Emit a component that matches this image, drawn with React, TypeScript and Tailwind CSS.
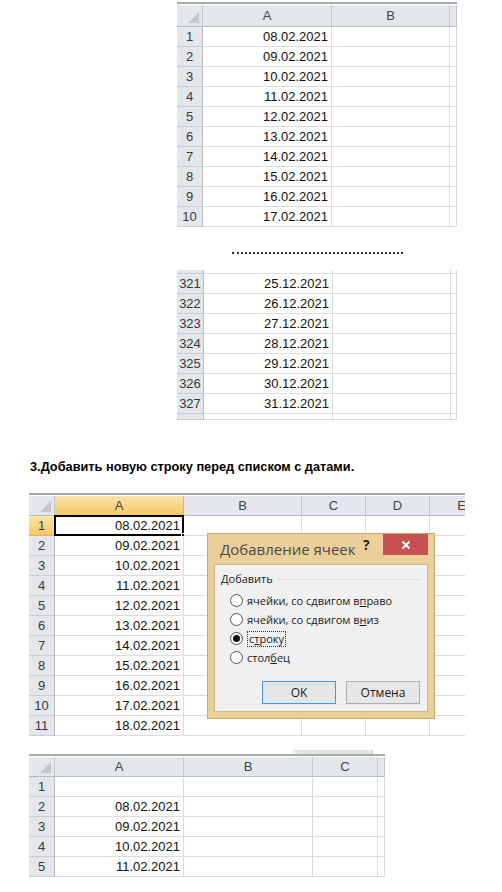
import React from "react";

type Col = { label: string; w: number; hl?: boolean };
type Row = { n: string; a?: string; h?: number; hl?: boolean; sel?: boolean };

const FONT = { fontFamily: '"Liberation Sans", Arial, sans-serif' };
const UI = { fontFamily: '"Open Sans", "Noto Sans", sans-serif' };

function Corner() {
  return (
    <div className="relative h-full w-full">
      <svg className="absolute right-[3px] bottom-[3px]" width="11" height="11" viewBox="0 0 11 11">
        <polygon points="11,0 11,11 0,11" fill="#c3c7cc" />
      </svg>
    </div>
  );
}

function Sheet({
  cols,
  rows,
  headerH = 22,
  showHeader = true,
  topStub = 0,
  bottomStub = 0,
}: {
  cols: Col[];
  rows: Row[];
  headerH?: number;
  showHeader?: boolean;
  topStub?: number;
  bottomStub?: number;
}) {
  const all: Row[] = [];
  if (topStub) all.push({ n: "", h: topStub });
  rows.forEach((r) => all.push(r));
  if (bottomStub) all.push({ n: "", h: bottomStub });

  return (
    <div className="flex flex-col text-[13px] text-[#111]" style={FONT}>
      {showHeader && (
        <>
          <div className="h-[2px] bg-[#a9a9a9]" />
          <div className="h-[1px] bg-white" />
          <div className="flex" style={{ height: headerH }}>
            {cols.map((c, i) => (
              <div
                key={i}
                style={{ width: c.w }}
                className={`shrink-0 flex items-center justify-center border-r border-b text-[#444] ${
                  c.hl
                    ? "bg-gradient-to-b from-[#fbe3a8] to-[#f6c960] border-r-[#e0b259] border-b-[#e9a73c]"
                    : "bg-[#e3e6ea] border-r-[#c3c7cc] border-b-[#b8bcc1]"
                }`}
              >
                {i === 0 ? <Corner /> : c.label}
              </div>
            ))}
          </div>
        </>
      )}
      {all.map((r, ri) => (
        <div key={ri} className="flex" style={{ height: r.h ?? 20 }}>
          {cols.map((c, ci) => {
            if (ci === 0)
              return (
                <div
                  key={ci}
                  style={{ width: c.w }}
                  className={`shrink-0 flex items-center justify-center border-r border-b text-[#3a3a3a] ${
                    r.hl
                      ? "bg-gradient-to-b from-[#fbe3a8] to-[#f6c960] border-r-[#e9a73c] border-b-[#e0b259]"
                      : "bg-[#e3e6ea] border-r-[#b8bcc1] border-b-[#c9cdd2]"
                  }`}
                >
                  {r.n}
                </div>
              );
            return (
              <div
                key={ci}
                style={{ width: c.w }}
                className="relative shrink-0 flex items-center justify-end pr-[3px] border-r border-b border-[#dcdcdc] bg-white"
              >
                {ci === 1 && r.a}
                {ci === 1 && r.sel && (
                  <>
                    <div className="absolute -left-[1px] -top-[1px] -right-[1px] -bottom-[1px] border-2 border-black" />
                    <div className="absolute -right-[3px] -bottom-[3px] w-[5px] h-[5px] bg-black border border-white" />
                  </>
                )}
              </div>
            );
          })}
        </div>
      ))}
    </div>
  );
}

function Radio({ checked, children }: { checked?: boolean; children: React.ReactNode }) {
  return (
    <div className="flex items-center h-[19px] gap-[4px]">
      <div className="w-[13px] h-[13px] rounded-full border border-[#555] bg-white flex items-center justify-center">
        {checked && <div className="w-[7px] h-[7px] rounded-full bg-[#111]" />}
      </div>
      <div className={checked ? "border border-dotted border-[#333] px-[1px] leading-[14px]" : "leading-[14px]"}>
        {children}
      </div>
    </div>
  );
}

function Dialog() {
  return (
    <div
      className="absolute left-[178px] top-[40px] w-[228px] h-[186px] bg-[#ebcf99] border border-[#c9a96c] flex flex-col"
      style={UI}
    >
      <div className="flex h-[21px]">
        <div className="flex-1 pl-[12px] pt-[4px] text-[15px] leading-[22px] text-[#4a4a4a]">Добавление ячеек</div>
        <div className="w-[20px] pt-[1px] text-[14px] font-bold text-[#222] leading-[20px]">?</div>
        <div className="w-[45px] h-[21px] bg-[#c75050] flex items-center justify-center mr-[6px]">
          <svg width="10" height="10" viewBox="0 0 10 10">
            <path d="M1.5 1.5 L8.5 8.5 M8.5 1.5 L1.5 8.5" stroke="white" strokeWidth="2" />
          </svg>
        </div>
      </div>
      <div className="mt-[9px] mx-[6px] h-[148px] bg-[#f0f0f0] border border-[#cdb98e] flex flex-col px-[6px] pt-[6px] text-[11px] text-[#1a1a1a]">
        <div className="flex items-center gap-[4px] h-[16px]">
          <span>Добавить</span>
          <div className="flex-1 h-[1px] bg-[#dcdcdc]" />
        </div>
        <div className="flex flex-col ml-[9px] mt-[4px]">
          <Radio>
            ячейки, со сдвигом в<u>п</u>раво
          </Radio>
          <Radio>
            ячейки, со сдвигом в<u>н</u>из
          </Radio>
          <Radio checked>
            с<u>т</u>року
          </Radio>
          <Radio>
            стол<u>б</u>ец
          </Radio>
        </div>
        <div className="flex gap-[10px] ml-[41px] mt-[14px]">
          <div className="w-[74px] h-[23px] bg-[#e6e6e6] border border-[#3c9be8] flex items-center justify-center text-[12px]">
            OK
          </div>
          <div className="w-[74px] h-[23px] bg-[#e6e6e6] border border-[#adadad] flex items-center justify-center text-[12px]">
            Отмена
          </div>
        </div>
      </div>
    </div>
  );
}

const COLS1: Col[] = [
  { label: "", w: 26 },
  { label: "A", w: 129 },
  { label: "B", w: 118 },
  { label: "", w: 7 },
];

const ROWS1: Row[] = Array.from({ length: 10 }, (_, i) => ({
  n: String(i + 1),
  a: `${String(8 + i).padStart(2, "0")}.02.2021`,
}));

const ROWS2: Row[] = Array.from({ length: 7 }, (_, i) => ({
  n: String(321 + i),
  a: `${25 + i}.12.2021`,
}));

const COLS2: Col[] = [
  { label: "", w: 27 },
  { label: "", w: 129 },
  { label: "", w: 118 },
  { label: "", w: 6 },
];

const COLS3: Col[] = [
  { label: "", w: 26 },
  { label: "A", w: 129, hl: true },
  { label: "B", w: 118 },
  { label: "C", w: 64 },
  { label: "D", w: 64 },
  { label: "E", w: 64 },
];

const ROWS3: Row[] = Array.from({ length: 11 }, (_, i) => ({
  n: String(i + 1),
  a: `${String(8 + i).padStart(2, "0")}.02.2021`,
  hl: i === 0,
  sel: i === 0,
}));

const COLS4: Col[] = [
  { label: "", w: 26 },
  { label: "A", w: 129 },
  { label: "B", w: 129 },
  { label: "C", w: 65 },
  { label: "", w: 7 },
];

const ROWS4: Row[] = [
  { n: "1" },
  { n: "2", a: "08.02.2021" },
  { n: "3", a: "09.02.2021" },
  { n: "4", a: "10.02.2021" },
  { n: "5", a: "11.02.2021" },
];

export default function App() {
  return (
    <div className="relative w-[502px] h-[892px] bg-white overflow-hidden flex flex-col">
      <div className="mt-[2px] ml-[177px] w-[280px] overflow-hidden">
        <Sheet cols={COLS1} rows={ROWS1} />
      </div>

      <div className="mt-[25px] ml-[232px] w-[171px] border-t-2 border-dotted border-[#333]" />

      <div className="mt-[16px] ml-[177px] w-[280px] overflow-hidden">
        <Sheet cols={COLS2} rows={ROWS2} showHeader={false} topStub={4} bottomStub={6} />
      </div>

      <div className="mt-[39px] ml-[30px] text-[12.75px] leading-[16px] font-bold text-black" style={FONT}>
        3.Добавить новую строку перед списком с датами.
      </div>

      <div className="relative mt-[18px] ml-[29px] w-[436px]">
        <div className="overflow-hidden">
          <Sheet cols={COLS3} rows={ROWS3} headerH={20} />
        </div>
        <Dialog />
      </div>

      <div className="mt-[14px] ml-[29px] w-[356px] overflow-hidden flex flex-col">
        <div className="ml-[262px] w-[82px] h-[4px] flex">
          <svg width="6" height="4" viewBox="0 0 6 4">
            <polygon points="0,0 6,0 6,4" fill="#e4e4e4" />
          </svg>
          <div className="flex-1 bg-[#e4e4e4] border-r border-[#c8c8c8]" />
        </div>
        <Sheet cols={COLS4} rows={ROWS4} headerH={20} />
      </div>
    </div>
  );
}
